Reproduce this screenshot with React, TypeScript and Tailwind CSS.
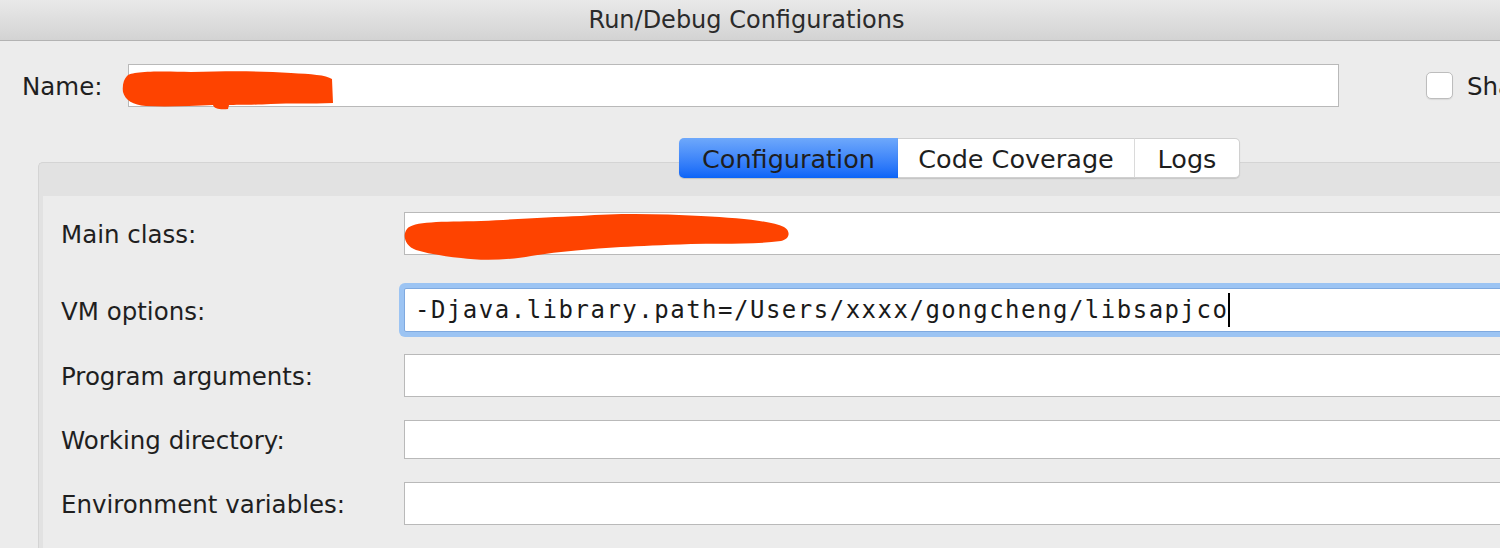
import React from 'react';

const labelFont = { fontFamily: '"DejaVu Sans", "Liberation Sans", sans-serif' };

type FieldRowProps = {
  label: string;
  mt: string;
  h: string;
  focused?: boolean;
  children?: React.ReactNode;
};

// one label + text field row in the Configuration tab
const FieldRow: React.FC<FieldRowProps> = ({ label, mt, h, focused, children }) => (
  <div className={`flex items-center ${mt} ${h}`}>
    <div className="w-[361px] shrink-0 pl-[18px] pt-[4px] text-[24.5px] text-[#1f1f1f] leading-none">{label}</div>
    <div
      className={`relative h-full w-[1200px] shrink-0 bg-white border ${
        focused ? 'border-[#7fa9df] ring-[5px] ring-[#9cc4f3] rounded-[2px]' : 'border-[#b9b9b9]'
      }`}
    >
      {children}
    </div>
  </div>
);

export default function App() {
  return (
    <div className="w-[1500px] h-[548px] overflow-hidden bg-[#ececec]" style={labelFont}>
      {/* Title bar */}
      <div className="h-[41px] flex items-center justify-center bg-gradient-to-b from-[#e9e9e9] to-[#d3d3d3] border-b border-[#b3b3b3]">
        <span className="text-[24px] text-[#2b2b2b] leading-none mr-[7px]">Run/Debug Configurations</span>
      </div>

      {/* Name row */}
      <div className="flex items-center mt-[23px] h-[43px] pl-[22px]">
        <div className="w-[106px] shrink-0 pt-[4px] text-[24.5px] text-[#1f1f1f] leading-none">Name:</div>
        <div className="relative w-[1211px] h-full shrink-0 bg-white border border-[#b9b9b9]">
          <svg className="absolute left-[-8px] top-[5px]" width="222" height="40" viewBox="0 0 222 40">
            <path
              d="M6 6 C10 1 40 1 70 2 C110 1 140 1 170 3 C190 4 205 5 211 9 L212 33 C190 34 170 33 150 34 C130 35 115 35 108 35 L107 39 C100 40 93 39 92 35 C70 36 45 37 25 36 C12 35 4 30 2 22 C1 15 3 9 6 6 Z"
              fill="#fe4300"
            />
          </svg>
        </div>
        <div className="ml-[87px] w-[27px] h-[27px] shrink-0 rounded-[5px] bg-white border border-[#bdbdbd] shadow-[0_1px_1px_rgba(0,0,0,0.08)]" />
        <div className="ml-[14px] pt-[4px] text-[24.5px] text-[#1f1f1f] leading-none whitespace-nowrap">Share</div>
      </div>

      {/* Tabs */}
      <div className="relative z-10 flex mt-[31px] ml-[679px] h-[40px] text-[25.5px] leading-none text-[#1e1e1e]">
        <div className="w-[219px] flex items-center justify-center pt-[3px] rounded-l-[5px] bg-gradient-to-b from-[#6ea8fb] to-[#0a64f7] shadow-[0_1px_1px_rgba(0,0,0,0.15)]">
          Configuration
        </div>
        <div className="w-[237px] flex items-center justify-center pt-[3px] bg-white border-y border-[#d0d0d0] border-r border-r-[#dddddd] shadow-[0_1px_1px_rgba(0,0,0,0.12)]">
          Code Coverage
        </div>
        <div className="w-[105px] flex items-center justify-center pt-[3px] bg-white rounded-r-[5px] border-y border-r border-[#d0d0d0] shadow-[0_1px_1px_rgba(0,0,0,0.12)]">
          Logs
        </div>
      </div>

      {/* Tab panel */}
      <div className="-mt-[16px] ml-[38px] w-[1500px] h-[400px] rounded-tl-[5px] bg-[#e2e2e2] border-t border-l border-[#d4d4d4] pl-[4px] pt-[33px]">
        <div className="h-full bg-[#ececec]">
          <FieldRow label="Main class:" mt="pt-[16px] box-content" h="h-[43px]">
            <svg className="absolute left-[-4px] top-[0px]" width="392" height="48" viewBox="0 0 392 48">
              <path
                d="M6 16 C12 8 40 9 80 8 C120 6 150 4 180 3 C220 0 260 1 300 3 C340 5 370 8 383 14 C390 18 389 26 380 28 C350 32 320 30 290 31 C260 32 240 33 220 34 C190 36 160 38 130 43 C110 47 80 48 60 45 C40 43 25 40 15 37 C4 33 1 22 6 16 Z"
                fill="#fe4300"
              />
            </svg>
          </FieldRow>
          <FieldRow label="VM options:" mt="mt-[33px]" h="h-[44px]" focused>
            <div
              className="h-full flex items-center pl-[10px] text-[24px] text-[#1a1a1a] whitespace-nowrap tracking-[1.5px]"
              style={{ fontFamily: '"DejaVu Sans Mono", "Liberation Mono", monospace' }}
            >
              -Djava.library.path=/Users/xxxx/gongcheng/libsapjco
              <span className="inline-block w-[2px] h-[34px] bg-black" />
            </div>
          </FieldRow>
          <FieldRow label="Program arguments:" mt="mt-[22px]" h="h-[43px]" />
          <FieldRow label="Working directory:" mt="mt-[23px]" h="h-[39px]" />
          <FieldRow label="Environment variables:" mt="mt-[23px]" h="h-[43px]" />
        </div>
      </div>
    </div>
  );
}
